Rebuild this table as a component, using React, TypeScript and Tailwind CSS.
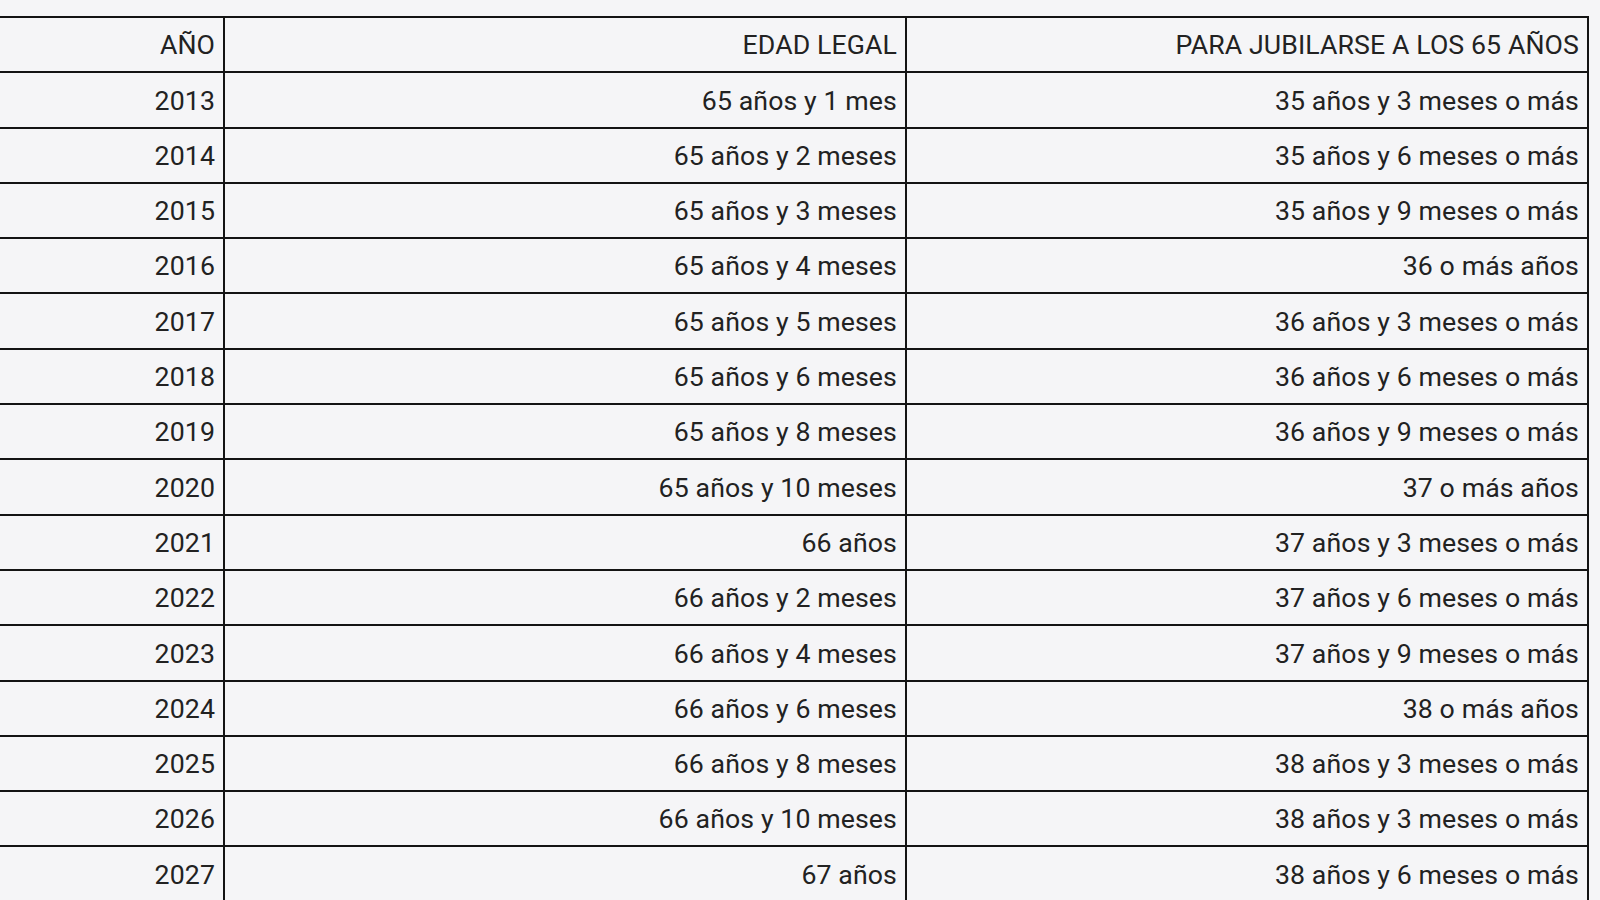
import React from "react";

const rows: [string, string, string][] = [
  ["2013", "65 años y 1 mes", "35 años y 3 meses o más"],
  ["2014", "65 años y 2 meses", "35 años y 6 meses o más"],
  ["2015", "65 años y 3 meses", "35 años y 9 meses o más"],
  ["2016", "65 años y 4 meses", "36 o más años"],
  ["2017", "65 años y 5 meses", "36 años y 3 meses o más"],
  ["2018", "65 años y 6 meses", "36 años y 6 meses o más"],
  ["2019", "65 años y 8 meses", "36 años y 9 meses o más"],
  ["2020", "65 años y 10 meses", "37 o más años"],
  ["2021", "66 años", "37 años y 3 meses o más"],
  ["2022", "66 años y 2 meses", "37 años y 6 meses o más"],
  ["2023", "66 años y 4 meses", "37 años y 9 meses o más"],
  ["2024", "66 años y 6 meses", "38 o más años"],
  ["2025", "66 años y 8 meses", "38 años y 3 meses o más"],
  ["2026", "66 años y 10 meses", "38 años y 3 meses o más"],
  ["2027", "67 años", "38 años y 6 meses o más"],
];

function Row({ cells }: { cells: [string, string, string] }) {
  return (
    <div className="grid grid-cols-[225px_682px_682px] h-[55.3px] border-b-2 border-[#141414]">
      {cells.map((c, i) => (
        <div
          key={i}
          className="flex items-center justify-end pr-[8px] pt-[2px] border-r-2 border-[#141414]"
        >
          {c}
        </div>
      ))}
    </div>
  );
}

export default function App() {
  return (
    <div
      className="w-[1600px] h-[900px] overflow-hidden bg-[#f5f5f7] text-[#222222] text-[26.7px] leading-none tracking-[0.1px]"
      style={{ fontFamily: "Roboto, 'Noto Sans', sans-serif" }}
    >
      <div className="pt-[16px]">
        <div className="w-[1589px] border-t-2 border-[#141414]">
          <Row cells={["AÑO", "EDAD LEGAL", "PARA JUBILARSE A LOS 65 AÑOS"]} />
          {rows.map((r) => (
            <Row key={r[0]} cells={r} />
          ))}
        </div>
      </div>
    </div>
  );
}
